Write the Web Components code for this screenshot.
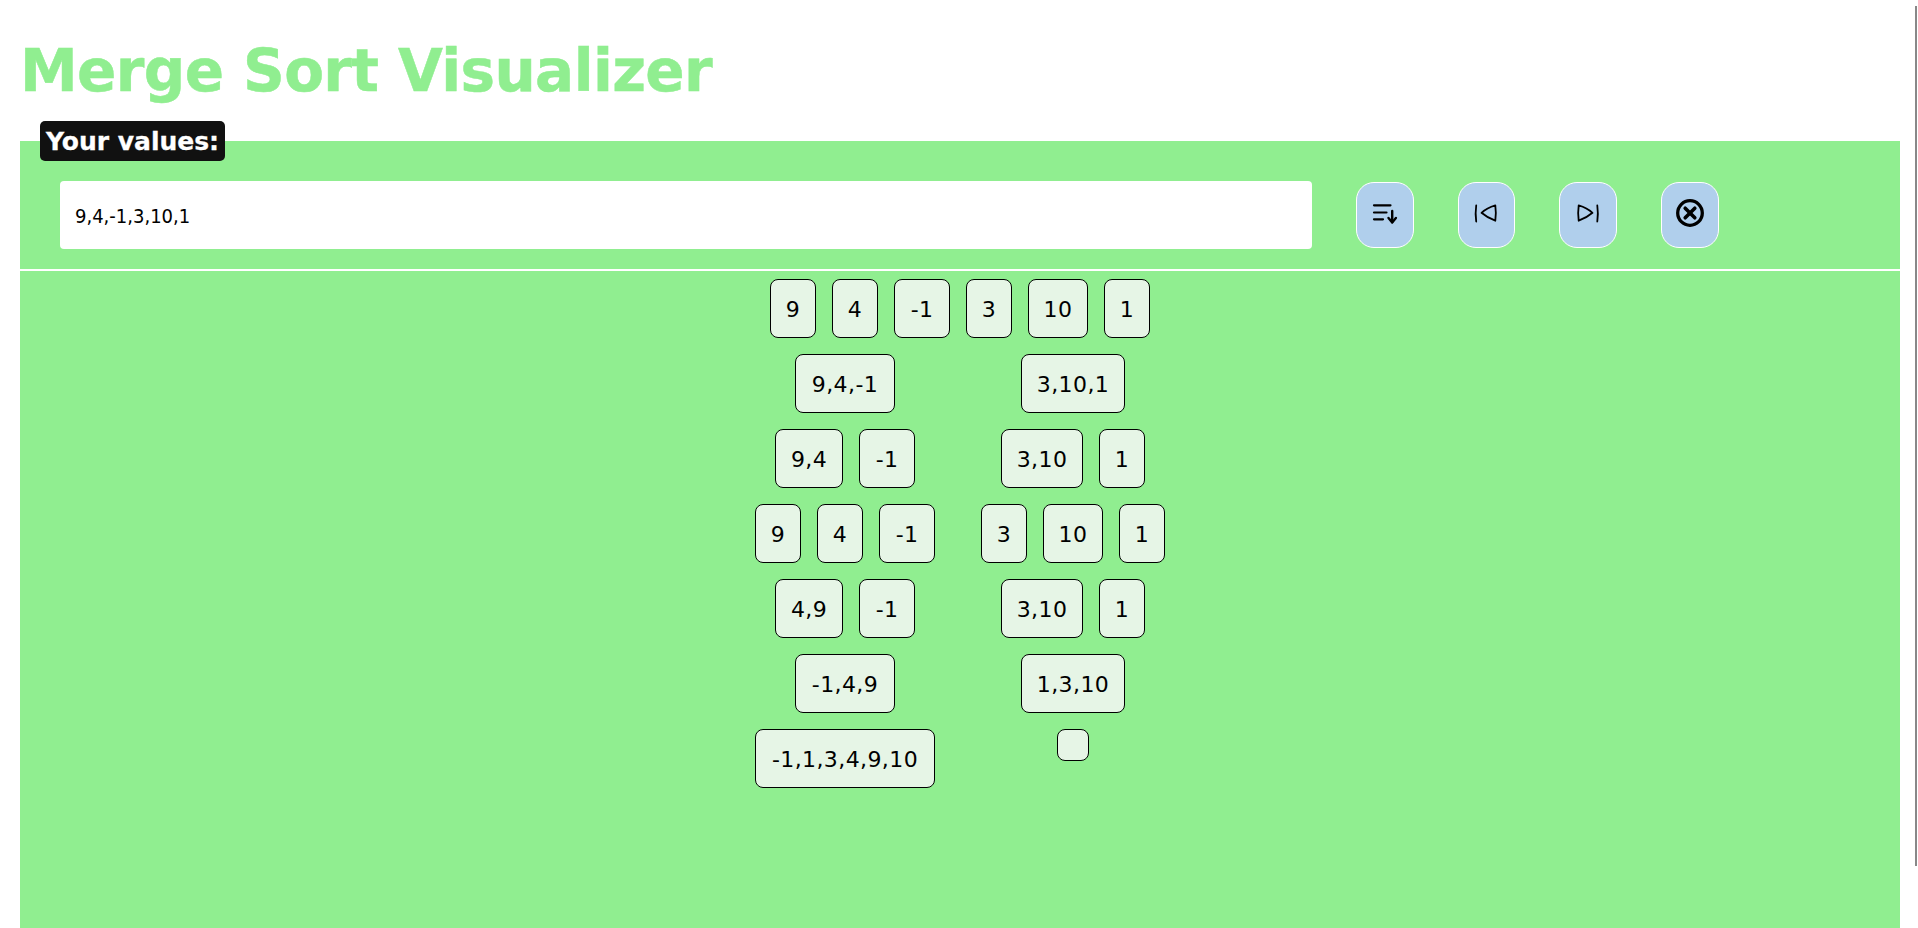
<!DOCTYPE html>
<html lang="en"><head><meta charset="utf-8"><title>Merge Sort Visualizer</title>
<style>
html,body{margin:0;height:100%;background:#fff;overflow:hidden}
body{font-family:"DejaVu Sans",sans-serif;height:928px;display:flex;flex-direction:column;padding:0 18px 0 20px;box-sizing:border-box}
</style></head><body>
<ms-title>Merge Sort Visualizer</ms-title>
<ms-panel label="Your values:">
  <ms-toolbar slot="controls">
    <ms-field>9,4,-1,3,10,1</ms-field>
    <ms-button title="Sort"><svg viewBox="0 0 24 24" width="24" height="24"><path d="M1 2.300h16.500M1 9.500h12.500M1 16.300h9" fill="none" stroke="#000" stroke-width="2.200" stroke-linecap="round"/><path d="M19.200 8v11" stroke="#000" stroke-width="2.400" fill="none" stroke-linecap="round"/><path d="M15.500 15l3.700 4.500 3.700-4.500" fill="none" stroke="#000" stroke-width="2.400" stroke-linecap="round" stroke-linejoin="round"/></svg></ms-button>
    <ms-button title="Previous"><svg viewBox="0 0 24 24" width="24" height="24"><path d="M2.200 2.500c-.7 5-.7 11 0 16M21.300 2.300C16 3.800 11 6.500 7.500 9.800c3.500 3 8.500 6 13.800 7.900 .7-5 .7-10.500 0-15.400z" fill="none" stroke="#000" stroke-width="1.800" stroke-linecap="round" stroke-linejoin="round"/></svg></ms-button>
    <ms-button title="Next"><svg viewBox="0 0 24 24" width="24" height="24"><path d="M21.300 2.500c.7 5 .7 11 0 16M2.700 2.300C8 3.800 13 6.500 16.500 9.800c-3.500 3-8.500 6-13.800 7.900-.7-5-.7-10.500 0-15.400z" fill="none" stroke="#000" stroke-width="1.800" stroke-linecap="round" stroke-linejoin="round"/></svg></ms-button>
    <ms-button title="Clear"><svg viewBox="0 2 28 28" width="28" height="28"><circle cx="14" cy="14" r="12.300" fill="none" stroke="#000" stroke-width="3.300"/><path d="M9.200 9.200l9.600 9.600M18.800 9.200l-9.600 9.600" stroke="#000" stroke-width="3.600" stroke-linecap="round"/></svg></ms-button>
  </ms-toolbar>
  <ms-flat>
    <ms-node w="46">9</ms-node><ms-node w="46">4</ms-node><ms-node w="56">-1</ms-node><ms-node w="46">3</ms-node><ms-node w="60">10</ms-node><ms-node w="46">1</ms-node>
  </ms-flat>
  <ms-row>
    <ms-cell slot="a"><ms-node w="100">9,4,-1</ms-node></ms-cell>
    <ms-cell slot="b"><ms-node w="104">3,10,1</ms-node></ms-cell>
  </ms-row>
  <ms-row>
    <ms-cell slot="a"><ms-node w="68">9,4</ms-node><ms-node w="56">-1</ms-node></ms-cell>
    <ms-cell slot="b"><ms-node w="82">3,10</ms-node><ms-node w="46">1</ms-node></ms-cell>
  </ms-row>
  <ms-row>
    <ms-cell slot="a"><ms-node w="46">9</ms-node><ms-node w="46">4</ms-node><ms-node w="56">-1</ms-node></ms-cell>
    <ms-cell slot="b"><ms-node w="46">3</ms-node><ms-node w="60">10</ms-node><ms-node w="46">1</ms-node></ms-cell>
  </ms-row>
  <ms-row>
    <ms-cell slot="a"><ms-node w="68">4,9</ms-node><ms-node w="56">-1</ms-node></ms-cell>
    <ms-cell slot="b"><ms-node w="82">3,10</ms-node><ms-node w="46">1</ms-node></ms-cell>
  </ms-row>
  <ms-row>
    <ms-cell slot="a"><ms-node w="100">-1,4,9</ms-node></ms-cell>
    <ms-cell slot="b"><ms-node w="104">1,3,10</ms-node></ms-cell>
  </ms-row>
  <ms-row>
    <ms-cell slot="a"><ms-node w="180">-1,1,3,4,9,10</ms-node></ms-cell>
    <ms-cell slot="b"><ms-node empty></ms-node></ms-cell>
  </ms-row>
</ms-panel>
<ms-scrollthumb></ms-scrollthumb>
<script>
function def(name, css, html, init){
  customElements.define(name, class extends HTMLElement{
    constructor(){super();const r=this.attachShadow({mode:"open"});r.innerHTML="<style>"+css+"</style>"+html;}
    connectedCallback(){ if(init) init(this); }
  });
}
def("ms-title",":host{display:block;flex:none;height:141px;box-sizing:border-box;padding-top:37px;color:#90ee90;font:bold 58px/68px 'DejaVu Sans',sans-serif;letter-spacing:-.62px;-webkit-text-stroke:.5px #90ee90;white-space:nowrap}h1{margin:0;font:inherit}","<h1><slot></slot></h1>");
def("ms-panel",":host{display:flex;flex-direction:column;flex:1;position:relative;background:#90ee90}.legend{position:absolute;left:20px;top:-20px;height:40px;width:185px;box-sizing:border-box;background:#111;color:#fff;border-radius:5px;font:bold 25px/42px 'DejaVu Sans',sans-serif;-webkit-text-stroke:.3px #fff;text-align:center;white-space:nowrap}.controls{display:block;border-bottom:2px solid #fff}.tree{display:flex;flex-direction:column;gap:16px;padding-top:8px}",
 "<div class='legend'></div><div class='controls'><slot name='controls'></slot></div><div class='tree'><slot></slot></div>",
 el=>{el.shadowRoot.querySelector(".legend").textContent=el.getAttribute("label")});
def("ms-toolbar",":host{display:flex;align-items:center;gap:44px;padding:40px 0 20px 40px}","<slot></slot>");
def("ms-field",":host{display:block;box-sizing:border-box;width:1252px;height:68px;background:#fff;border-radius:4px;padding:0 15px;font:20px/70px 'DejaVu Sans Condensed','DejaVu Sans',sans-serif;color:#000;flex:none;overflow:hidden}","<slot></slot>");
def("ms-button",":host{display:flex;align-items:center;justify-content:center;flex:none;box-sizing:border-box;width:57.67px;height:66px;background:#b0cfec;border:1px solid #fff;border-radius:18px}::slotted(svg){overflow:visible}","<slot></slot>");
def("ms-flat",":host{display:flex;justify-content:center;gap:16px;align-items:flex-start}","<slot></slot>");
def("ms-row",":host{display:grid;grid-template-columns:196px 200px;gap:30px;justify-content:center;align-items:start}","<slot name='a'></slot><slot name='b'></slot>");
def("ms-cell",":host{display:flex;justify-content:center;gap:16px;align-items:flex-start}","<slot></slot>");
def("ms-node",":host{display:block;box-sizing:border-box;flex:none;min-height:32px;min-width:32px;padding:16px 0 14px;text-align:center;background:#e6f5e6;border:1px solid #000;border-radius:8px;font:22px/27px 'DejaVu Sans',sans-serif;letter-spacing:.4px;color:#000;white-space:nowrap}:host([empty]){padding:0;height:32px;width:32px}","<slot></slot>",
 el=>{const w=el.getAttribute("w"); if(w) el.style.width=w+"px"});
def("ms-scrollthumb",":host{display:block;position:absolute;left:1915px;top:6px;width:2px;height:860px;background:#888}","");
</script>
</body></html>
